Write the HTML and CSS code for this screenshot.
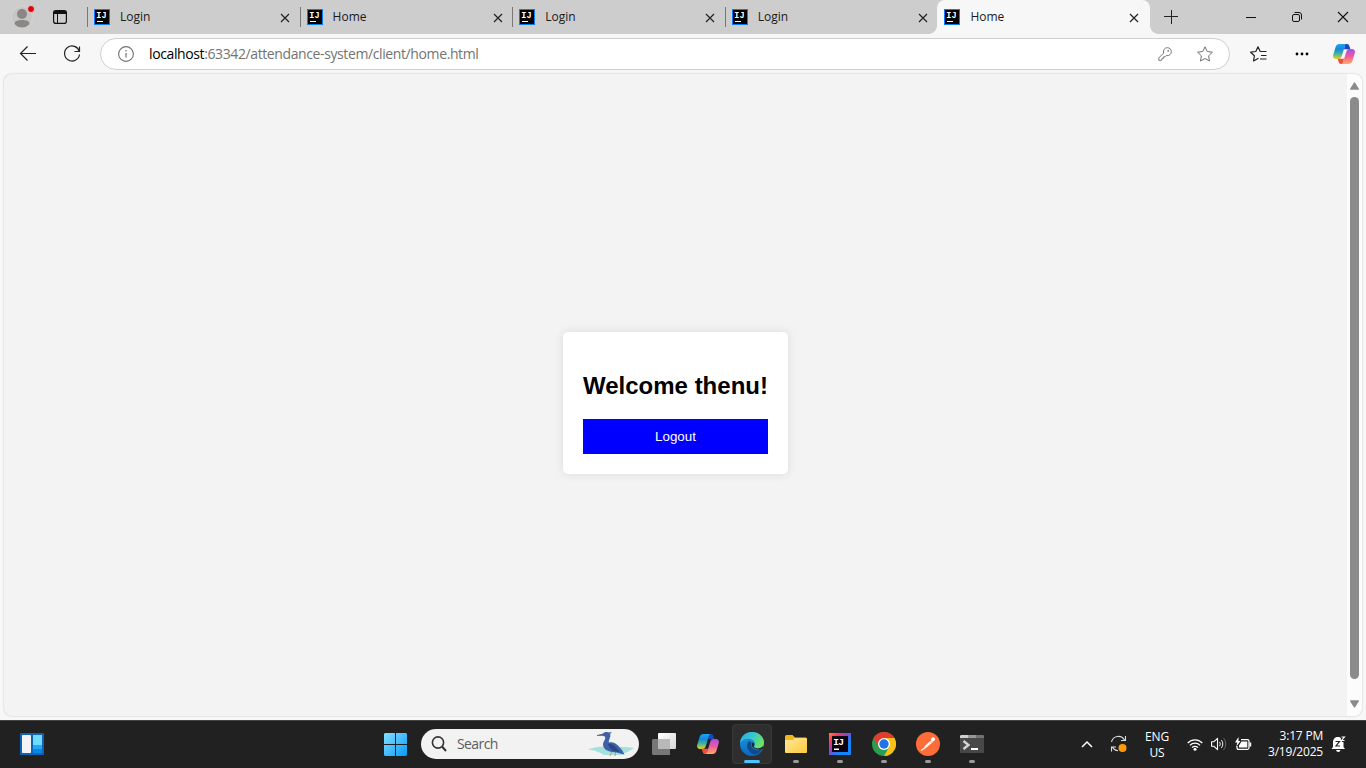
FILE: index.html
```html
<!DOCTYPE html>
<html lang="en">
<head>
<meta charset="utf-8">
<title>Home</title>
<link rel="stylesheet" href="styles.css">
</head>
<body>
<svg class="defs" width="0" height="0">
  <defs>
    <linearGradient id="cpL" x1="0" y1="0" x2="0" y2="1"><stop offset="0" stop-color="#18a6f0"/><stop offset=".35" stop-color="#1688dc"/><stop offset=".65" stop-color="#42b59a"/><stop offset="1" stop-color="#f2cc1c"/></linearGradient>
    <linearGradient id="cpR" x1="0" y1="0" x2="0" y2="1"><stop offset="0" stop-color="#a34ee8"/><stop offset=".5" stop-color="#ee5c9c"/><stop offset="1" stop-color="#ffae62"/></linearGradient>
    <linearGradient id="edgeT" x1="0" y1="0" x2="1" y2=".5"><stop offset="0" stop-color="#29aee6"/><stop offset=".5" stop-color="#35c6d2"/><stop offset="1" stop-color="#6de360"/></linearGradient>
    <linearGradient id="edgeB" x1="0" y1="0" x2="0" y2="1"><stop offset="0" stop-color="#1c9ce4"/><stop offset="1" stop-color="#0b67c0"/></linearGradient>
    <linearGradient id="win" x1="0" y1="0" x2="1" y2="1"><stop offset="0" stop-color="#85dfff"/><stop offset="1" stop-color="#079af8"/></linearGradient>
    <linearGradient id="fold" x1="0" y1="0" x2="1" y2="1"><stop offset="0" stop-color="#ffe89a"/><stop offset="1" stop-color="#ffca3c"/></linearGradient>
    <linearGradient id="ij" x1="0" y1="0" x2="1" y2="1"><stop offset="0" stop-color="#fd8a25"/><stop offset=".22" stop-color="#fe3266"/><stop offset=".45" stop-color="#8846cf"/><stop offset=".65" stop-color="#1684f5"/><stop offset="1" stop-color="#1684f5"/></linearGradient>
    <linearGradient id="tv" x1="0" y1="0" x2="1" y2="1"><stop offset="0" stop-color="#ffffff"/><stop offset="1" stop-color="#d8d8d8"/></linearGradient>
    <symbol id="favicon" viewBox="0 0 16 16">
      <rect width="16" height="16" fill="#087cfa"/><rect x="1" y="1" width="14" height="14" fill="#000"/>
      <text x="2.300" y="9" class="ij-mark">IJ</text><rect x="3" y="12" width="6" height="1" fill="#fff"/>
    </symbol>
    <symbol id="close" viewBox="0 0 10 10"><path d="M1 1l8 8M9 1L1 9" stroke="#222" stroke-width="1.15" fill="none"/></symbol>
    <symbol id="copilot" viewBox="0 0 22 20">
      <path d="M12 0h2c1.300 0 1.900.8 2.300 2l1 3.200H11z" fill="#1848c0"/>
      <path d="M6.500 0H14c-1.300.2-1.900 1.200-2.300 2.500L8.800 12C8.200 14 7.300 15 5.500 15H3C.6 15-.3 13 .2 11L2.600 3C3.200 1 4.500 0 6.500 0z" fill="url(#cpL)"/>
      <path d="M10 20H8c-1.300 0-1.900-.8-2.300-2l-1-3.200H11z" fill="#f0503a"/>
      <path d="M15.500 20H8c1.300-.2 1.900-1.200 2.300-2.500L13.200 8C13.800 6 14.700 5 16.500 5H19c2.400 0 3.300 2 2.800 4l-2.400 8c-.6 2-1.900 3-3.900 3z" fill="url(#cpR)"/>
    </symbol>
  </defs>
</svg>

<header class="tabstrip">
  <div class="avatar">
    <svg width="22" height="22" viewBox="0 0 22 22"><circle cx="11" cy="11" r="10.500" fill="#c8c6c4" stroke="#d6d2ce"/><circle cx="11" cy="8" r="5" fill="#8a8886"/><path d="M3.500 18c0-3 3-4 7.500-4s7.500 1 7.500 4c-2 2.500-4.500 3.500-7.500 3.500S5.500 20.500 3.500 18z" fill="#8a8886"/></svg>
    <i class="dot"></i>
  </div>
  <svg class="workspace" width="14" height="14" viewBox="0 0 14 14"><rect x=".6" y=".6" width="12.800" height="12.800" rx="2.200" fill="none" stroke="#111" stroke-width="1.200"/><path d="M1 1h12v3H1z" fill="#111"/><path d="M4.500 4v9" stroke="#111"/></svg>
  <nav class="tabs">
    <div class="tab"><svg class="fav"><use href="#favicon"/></svg><span>Login</span><svg class="x"><use href="#close"/></svg></div>
    <div class="tab"><svg class="fav"><use href="#favicon"/></svg><span>Home</span><svg class="x"><use href="#close"/></svg></div>
    <div class="tab"><svg class="fav"><use href="#favicon"/></svg><span>Login</span><svg class="x"><use href="#close"/></svg></div>
    <div class="tab"><svg class="fav"><use href="#favicon"/></svg><span>Login</span><svg class="x"><use href="#close"/></svg></div>
    <div class="tab active"><svg class="fav"><use href="#favicon"/></svg><span>Home</span><svg class="x"><use href="#close"/></svg></div>
  </nav>
  <svg class="newtab" width="14" height="14" viewBox="0 0 14 14"><path d="M7.500 0v14M0 6.500h14" stroke="#222"/></svg>
  <div class="winctl">
    <svg width="46" height="34"><path d="M18 17.500h10" stroke="#111"/></svg>
    <svg width="46" height="34"><rect x="18.500" y="14.500" width="7" height="7" rx="1.500" fill="none" stroke="#111"/><path d="M20.500 12.500h4.500a2.500 2.500 0 0 1 2.500 2.500v4.500" fill="none" stroke="#111"/></svg>
    <svg width="46" height="34"><path d="M18 12l10 10M28 12L18 22" stroke="#111" stroke-width="1.100"/></svg>
  </div>
</header>

<div class="toolbar">
  <svg width="44" height="38"><path d="M14.500 18.500H30M21.500 11.500l-7 7 7 7" fill="none" stroke="#222" stroke-width="1.200"/></svg>
  <svg width="44" height="38"><path d="M29.300 16.500A7.500 7.500 0 1 0 29.500 19.500M29.500 11.500v5h-5" fill="none" stroke="#222" stroke-width="1.200"/></svg>
  <div class="address">
    <svg class="info" width="16" height="16" viewBox="0 0 16 16"><circle cx="8" cy="8" r="7.400" fill="none" stroke="#707070" stroke-width="1.100"/><path d="M8 7v4.500" stroke="#707070" stroke-width="1.200"/><circle cx="8" cy="4.800" r=".8" fill="#707070"/></svg>
    <p class="url"><b>localhost</b>:63342/attendance-system/client/home.html</p>
    <svg class="key" width="14" height="14" viewBox="0 0 14 14"><path d="M5.500 6.200C5 2.800 6.800.7 9.300.7s4 1.800 4 4c0 2.500-2.200 4.500-5.100 3.900L7 9.800H5.700v1.500H4.200l-.6 2H.8v-2.400z" fill="none" stroke="#777"/><circle cx="10.200" cy="3.800" r=".9" fill="#777"/></svg>
    <svg class="star" width="16" height="16" viewBox="0 0 16 16"><path d="M8 .8l2.200 4.700 5.200.7-3.800 3.600.9 5.200L8 12.500 3.500 15l.9-5.200L.6 6.200l5.200-.7z" fill="none" stroke="#707070" stroke-linejoin="round"/></svg>
  </div>
  <svg class="favs" width="17" height="16" viewBox="0 0 17 16"><path d="M10.200 5.500L8 .8 5.800 5.500.6 6.200l3.800 3.600-.9 5.200L8.500 12.200M10.200 5.500h6.300M11 9.500h5.500M10 13h6.500" fill="none" stroke="#222" stroke-width="1.200" stroke-linejoin="round"/></svg>
  <svg class="dots" width="14" height="4" viewBox="0 0 14 4"><circle cx="2" cy="2" r="1.400"/><circle cx="7" cy="2" r="1.400"/><circle cx="12" cy="2" r="1.400"/></svg>
  <svg class="pilot" width="22" height="20"><use href="#copilot"/></svg>
</div>

<div class="frame">
  <main class="page">
    <section class="card">
      <h2>Welcome thenu!</h2>
      <button>Logout</button>
    </section>
  </main>
  <div class="scroll">
    <svg width="9" height="8" viewBox="0 0 9 8"><path d="M4.500 1L8.300 7H.7z" fill="#8b8b8b" stroke="#8b8b8b" stroke-width="1.400" stroke-linejoin="round"/></svg>
    <div class="thumb"></div>
    <svg width="9" height="8" viewBox="0 0 9 8"><path d="M4.500 7L8.300 1H.7z" fill="#8b8b8b" stroke="#8b8b8b" stroke-width="1.400" stroke-linejoin="round"/></svg>
  </div>
</div>

<footer class="taskbar">
  <svg class="widgets" width="24" height="22" viewBox="0 0 24 22"><rect width="24" height="22" rx="1" fill="#0e62b8"/><rect x="2" y="2" width="9" height="18" rx=".8" fill="#f4f4f4"/><path d="M13 2h9v10h-9z" fill="#6fdcff"/><path d="M13 12h9v4h-9z" fill="#23a7f5"/><path d="M13 16h9v4h-9z" fill="#0788e8"/></svg>
  <svg class="start" width="23" height="23" viewBox="0 0 23 23"><path d="M1 0h10v11H0V1zM12 0h10l1 1v10H12zM0 12h11v11H1l-1-1zM12 12h11v10l-1 1H12z" fill="url(#win)"/></svg>
  <div class="search">
    <svg width="16" height="16" viewBox="0 0 16 16"><circle cx="7" cy="6.500" r="5.600" fill="none" stroke="#333" stroke-width="1.600"/><path d="M11 10.500l4 4.500" stroke="#333" stroke-width="2"/></svg>
    <span>Search</span>
    <svg class="heron" width="46" height="26" viewBox="0 0 46 26"><path d="M0 18c4-1 6-1 10-2l14-1 10 1c5 0 8 0 12 1-2 2-5 2-6 4-4 0-3 3-8 3H18c-5 0-5-3-9-3 0-2-5-1-9-3z" fill="#a4e1dc"/><path d="M25 18l-3 7M28 18l-1 7" stroke="#dc8b68"/><path d="M9 4.500l6-2c2-2 5-1.500 6-1l3-.5-2 2c1.500 3-2 6-1 8.500 6-1.500 9 3 13 7.500l2.500 4.500c-4-.5-5-1.500-8-2-6-.5-12.500-1.500-13.500-7.500 0-4 3.500-6 1.800-8.500-2-1.500-4 0-7.800-1z" fill="#3d62a8"/><path d="M20 13c5-1 8 4 12 8-6 0-10-2-12-8z" fill="#294985"/><path d="M9 4.500l6-1" stroke="#73667a"/></svg>
  </div>
  <div class="apps">
    <div class="app"><svg width="24" height="22" viewBox="0 0 24 22"><rect x="6" width="18" height="16" rx="1" fill="url(#tv)"/><path d="M1 6h17v16H1l-1-1V7z" fill="#777"/><path d="M6 6h12v10H6z" fill="#b9b9b9"/></svg></div>
    <div class="app"><svg width="22" height="20"><use href="#copilot"/></svg></div>
    <div class="app current"><svg width="24" height="24" viewBox="0 0 24 24"><circle cx="12" cy="12" r="12" fill="url(#edgeB)"/><path d="M0 11C.5 4.500 5.500 0 12 0c7 0 12 5 12 10.500 0 4-3 6-6.500 6-2.500 0-4-1-3.500-2 2-2.500 1-6.500-4-7.500C6 6 2 8 0 11z" fill="url(#edgeT)"/><path d="M9 9c-4 4-1.500 12 6 13.500 3-.5 5.500-2.500 7-5-5 2-10 0-11-4-.2-1 .2-2 .5-3z" fill="#114a8b"/><path d="M12 11c1.300-.5 2.500.5 2.300 2-.5 1-.9 1.500 0 2.300 1.200 1.300 5 1.900 8.200-.8l1.300.7-1 1.800c-4.500 1.500-9.500 0-10.800-3-.4-1-.3-2 0-3z" fill="#262626"/></svg><i></i></div>
    <div class="app"><svg width="22" height="19" viewBox="0 0 22 19"><path d="M0 1.500Q0 0 1.500 0h6L10 2.500h10.500Q22 2.500 22 4v6H0z" fill="#f5b51d"/><path d="M0 5h8l2-2h11q1 0 1 1v13q0 1-1 1H1q-1 0-1-1z" fill="url(#fold)"/></svg><i></i></div>
    <div class="app"><svg width="22" height="22" viewBox="0 0 22 22"><rect width="22" height="22" fill="url(#ij)"/><rect x="3" y="3" width="16" height="16" fill="#0a0210"/><text x="4.300" y="11.500" class="ij-mark big">IJ</text><rect x="5" y="15.500" width="5" height="1.500" fill="#fff"/></svg><i></i></div>
    <div class="app"><svg width="24" height="24" viewBox="0 0 24 24"><circle cx="12" cy="12" r="12" fill="#2a9d4e"/><path d="M12 12L1.600 6A12 12 0 0 1 22.400 6z" fill="#e33b2e"/><path d="M12 6h10.400A12 12 0 0 1 12 24l5.200-9z" fill="#fbc116"/><path d="M1.600 6l5.200 9L12 6z" fill="#e33b2e"/><circle cx="12" cy="12" r="6" fill="#fff"/><circle cx="12" cy="12" r="4.700" fill="#1f72e8"/></svg><i></i></div>
    <div class="app"><svg width="24" height="24" viewBox="0 0 24 24"><circle cx="12" cy="12" r="12" fill="#ff6c37"/><path d="M8 15l5.500-5.500 2 1.700-6 5z" fill="#fff"/><path d="M13.500 9.500l2 1.700 1.700-1.500-1.800-1.700z" fill="#ffe1d6"/><circle cx="17" cy="7.200" r="2" fill="#fff"/><path d="M5 18.500l4.500-3" stroke="#fff" stroke-width="1.300"/></svg><i></i></div>
    <div class="app"><svg width="24" height="18" viewBox="0 0 24 18"><rect width="24" height="18" rx="1" fill="#484848"/><path d="M0 3V1l1-1h7v3z" fill="#cecece"/><path d="M8 0h8v3H8z" fill="#969696"/><path d="M16 0h7l1 1v2h-8z" fill="#727272"/><path d="M3.500 6l5 4-5 4" fill="none" stroke="#d5d5d5" stroke-width="2.300"/><path d="M11 14h7" stroke="#fff" stroke-width="2"/></svg><i></i></div>
  </div>
  <div class="tray">
    <svg class="chev" width="12" height="8" viewBox="0 0 12 8"><path d="M1 7l5-5 5 5" fill="none" stroke="#fff" stroke-width="1.500"/></svg>
    <svg class="sync" width="18" height="18" viewBox="0 0 18 18"><path d="M1.500 7A7 7 0 0 1 14.500 5M15.500 1v4.500H11M8 15.800a7 7 0 0 1-5.500-3.500M1.500 16.500V12H6" fill="none" stroke="#ddd" stroke-width="1.100"/><circle cx="12.500" cy="13" r="4" fill="#ff9a0a"/></svg>
    <div class="lang">ENG<br>US</div>
    <svg class="wifi" width="16" height="13" viewBox="0 0 16 13"><path d="M.7 5a10 10 0 0 1 14.600 0M2.900 7.300a7 7 0 0 1 10.200 0M5 9.600a4.200 4.200 0 0 1 6 0" fill="none" stroke="#fff" stroke-width="1.200"/><circle cx="8" cy="11.300" r="1.500" fill="#fff"/></svg>
    <svg class="vol" width="16" height="14" viewBox="0 0 16 14"><path d="M.6 4.700H3L6.500 1.400v11.200L3 9.300H.6z" fill="none" stroke="#fff" stroke-width="1.100" stroke-linejoin="round"/><path d="M8.500 4.800a3.500 3.500 0 0 1 0 4.400M10.300 3a6 6 0 0 1 0 8" fill="none" stroke="#eee"/><path d="M12.500 1a9 9 0 0 1 0 12" fill="none" stroke="#666"/></svg>
    <svg class="batt" width="17" height="14" viewBox="0 0 17 14"><path d="M6 2.700h6.500q1.500 0 1.500 1.500v6.600q0 1.500-1.500 1.500h-9Q2 12.300 2 10.800V9" fill="none" stroke="#fff" stroke-width="1.300"/><path d="M6.500 4.500h5.800v6H4V8.500zM14.500 5.500h1.700v4h-1.700z" fill="#fff"/><path d="M3.500 0L0 5.500h2.300L1.300 9.500l4.200-5.500H3.500z" fill="#fff"/></svg>
    <div class="clock">3:17 PM<br>3/19/2025</div>
    <svg class="bell" width="15" height="16" viewBox="0 0 15 16"><path d="M2 11V6.500C2 3 4 1 7 1c3.300 0 5.500 2.500 5.500 5.500V11l1.500 2H.5zM5 14h4.500q-.5 2-2.200 2T5 14z" fill="#fff"/><path d="M9 0h6v6h-4z" fill="#222"/><path d="M4.500 5.500h4L5 10h4" fill="none" stroke="#222" stroke-width="1.200"/><path d="M10.500 1h3l-3 3.500h3" fill="none" stroke="#fff" stroke-width="1.100"/></svg>
  </div>
</footer>
</body>
</html>
```

FILE: styles.css
```css
* { box-sizing: border-box; }
body { margin: 0; width: 1366px; height: 768px; overflow: hidden; display: flex; flex-direction: column; background: #f7f7f7; font-family: "Open Sans", "Noto Sans", sans-serif; }
svg { display: block; flex: none; }
.defs { position: absolute; }
.ij-mark { font: bold 8.5px "Liberation Mono", monospace; fill: #fff; }
.ij-mark.big { font-size: 9.5px; letter-spacing: -.7px; }

.tabstrip { flex: none; height: 34px; background: #cdcdcd; display: flex; align-items: center; }
.avatar { position: relative; margin-left: 11px; width: 22px; height: 22px; }
.avatar .dot { position: absolute; left: 16px; top: -1px; width: 8px; height: 8px; border-radius: 50%; background: #e3000b; border: 1px solid #dcc8c8; }
.workspace { margin-left: 20px; }
.tabs { display: flex; margin-left: 20px; height: 34px; }
.tab { width: 212.6px; height: 34px; display: flex; align-items: center; padding: 0 9.6px 0 7px; font-size: 12px; color: #1b1b1b; background: linear-gradient(#777, #777) no-repeat 0 7px / 1px 20px; }
.tab .fav { width: 16px; height: 16px; }
.tab span { margin-left: 10px; flex: 1; line-height: 16px; }
.tab .x { width: 10px; height: 10px; margin-top: 1px; }
.tab.active { position: relative; width: 213px; background: #f7f7f7; border-radius: 8px 8px 0 0; padding-right: 11px; }
.tab.active::before, .tab.active::after { content: ""; position: absolute; bottom: 0; width: 8px; height: 8px; }
.tab.active::before { left: -8px; background: radial-gradient(circle at 0 0, transparent 7.5px, #f7f7f7 8px); }
.tab.active::after { right: -8px; background: radial-gradient(circle at 100% 0, transparent 7.5px, #f7f7f7 8px); }
.newtab { margin-left: 14px; }
.winctl { display: flex; margin-left: auto; }

.toolbar { flex: none; height: 40px; display: flex; align-items: center; padding: 0 11px 0 6px; }
.address { width: 1130px; height: 32px; margin: 0 0 0 6px; border: 1px solid #cfcfcf; border-radius: 16px; background: #fff; display: flex; align-items: center; padding-left: 17px; }
.url { margin: 0 auto 0 15px; font-size: 14px; line-height: 20px; color: #737373; white-space: nowrap; letter-spacing: -.39px; }
.url b { font-weight: 400; color: #000; }
.star { margin: 0 16px 0 25px; }
.favs { margin-left: 20px; }
.dots { margin-left: 28px; }
.pilot { margin-left: auto; }

.frame { flex: none; width: 1358px; height: 642px; margin-left: 4px; display: flex; background: #f3f3f3; border-radius: 8px; overflow: hidden; box-shadow: 0 0 2px #bbb; }
.page { flex: 1; display: flex; align-items: center; justify-content: center; padding-top: 16px; }
.card { width: 225px; padding: 20px; background: #fff; border-radius: 5px; box-shadow: 0 0 10px rgba(0,0,0,.1); font-family: "Liberation Sans", Arial, sans-serif; }
.card h2 { margin: 20px 0; font-size: 24px; line-height: 27px; text-align: center; white-space: nowrap; color: #000; }
.card button { display: block; width: 100%; height: 35px; padding: 0; border: 0; background: #00f; color: #fff; font: 13.333px "Liberation Sans", Arial, sans-serif; }
.scroll { width: 15px; background: #fcfcfc; display: flex; flex-direction: column; align-items: center; padding: 8px 0 8px; }
.thumb { width: 9px; height: 582px; margin: 7px 0 auto; border-radius: 5px; background: #8b8b8b; }

.taskbar { flex: none; height: 48px; margin-top: 4px; padding-bottom: 1px; background: #212121; border-top: 1px solid #444; display: flex; align-items: center; color: #fff; }
.widgets { margin-left: 20px; }
.start { margin-left: 340px; }
.search { margin-left: 14px; width: 218px; height: 30px; border-radius: 15px; background: #f2f2f2; display: flex; align-items: center; padding: 0 5px 0 10px; font-size: 14px; color: #5c5c5c; }
.search span { margin: -1px 0 0 10px; letter-spacing: -.6px; }
.heron { margin-left: auto; }
.apps { display: flex; margin-left: 3px; }
.app { position: relative; width: 44px; height: 40px; display: flex; align-items: center; justify-content: center; }
.app.current { width: 40px; margin: 0 2px; background: #2e2e2e; border-radius: 4px; box-shadow: inset 0 0 0 1px #383838; }
.app i { position: absolute; left: 50%; bottom: 1px; width: 6px; height: 3px; margin-left: -3px; border-radius: 2px; background: #9a9a9a; }
.app.current i { width: 16px; margin-left: -8px; background: #4cc2ff; }
.tray { display: flex; align-items: center; margin-left: auto; padding-right: 20px; font-size: 12px; line-height: 16px; }
.sync { margin-left: 17px; }
.lang { width: 40px; margin-left: 9px; padding-top: 2px; text-align: center; letter-spacing: -.2px; }
.wifi { margin-left: 10px; }
.vol { margin-left: 8px; }
.batt { margin-left: 8px; }
.clock { width: 63px; margin-left: 8px; text-align: right; letter-spacing: -.2px; white-space: nowrap; }
.bell { margin-left: 8px; }
```
